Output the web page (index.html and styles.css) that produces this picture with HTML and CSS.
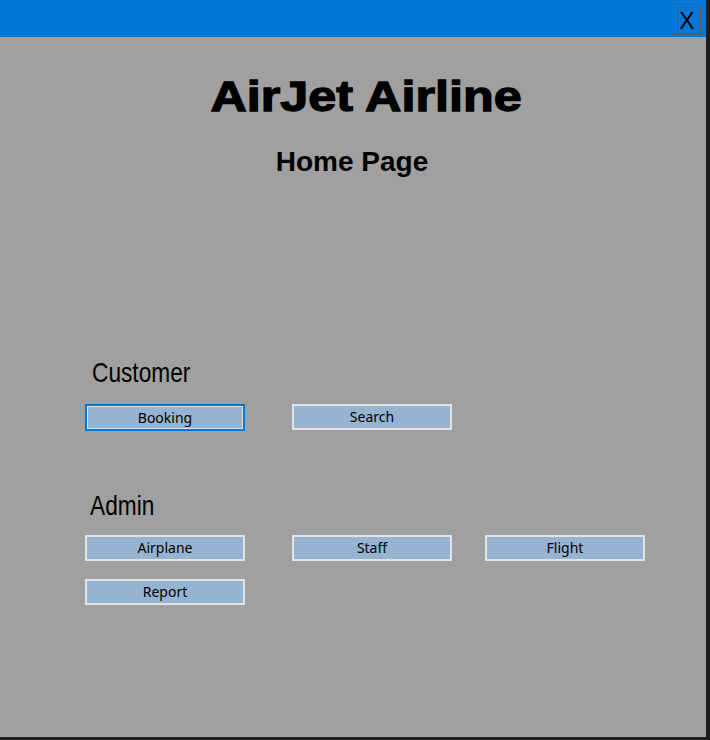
FILE: index.html
```html
<!DOCTYPE html>
<html>
<head>
<meta charset="utf-8">
<title>AirJet Airline</title>
<link rel="stylesheet" href="styles.css">
</head>
<body>
<div class="window">
  <div class="titlebar">
    <button class="close">X</button>
  </div>
  <div class="content">
    <h1 class="title"><span>AirJet Airline</span></h1>
    <h2 class="subtitle">Home Page</h2>
    <section class="group group-customer">
      <div class="label label-customer"><span>Customer</span></div>
      <div class="grid">
        <button class="btn btn-focus">Booking</button>
        <button class="btn">Search</button>
      </div>
    </section>
    <section class="group group-admin">
      <div class="label"><span>Admin</span></div>
      <div class="grid">
        <button class="btn">Airplane</button>
        <button class="btn">Staff</button>
        <button class="btn">Flight</button>
        <button class="btn">Report</button>
      </div>
    </section>
  </div>
</div>
</body>
</html>
```
FILE: styles.css
```css
html, body {
  margin: 0;
  padding: 0;
}
body {
  background: #1e1e1e;
  width: 710px;
  height: 740px;
  overflow: hidden;
}
.window {
  width: 706px;
  height: 737px;
  background: #a0a0a0;
  display: flex;
  flex-direction: column;
}
.titlebar {
  height: 37px;
  background: #0078d7;
  display: flex;
  justify-content: flex-end;
  align-items: flex-start;
  padding-top: 7px;
  padding-right: 5px;
  box-sizing: border-box;
}
.close {
  width: 28px;
  height: 28px;
  box-sizing: border-box;
  border: 1px solid #5c5a55;
  background: transparent;
  color: #000;
  font-family: "Liberation Sans", Arial, sans-serif;
  font-size: 23px;
  line-height: 26px;
  padding: 0;
  margin: 0;
  display: flex;
  align-items: center;
  justify-content: center;
}
.content {
  display: flex;
  flex-direction: column;
}
.title {
  margin: 38px 0 0 0;
  padding-left: 27px;
  text-align: center;
  font-family: "Liberation Sans", Arial, sans-serif;
  font-weight: bold;
  font-size: 43px;
  line-height: 43px;
  -webkit-text-stroke: 1.3px #000;
  color: #000;
}
.title span {
  display: inline-block;
  transform: scaleX(1.17);
  transform-origin: center center;
}
.subtitle {
  margin: 30px 0 0 0;
  padding-right: 2px;
  text-align: center;
  font-family: "Liberation Sans", Arial, sans-serif;
  font-weight: bold;
  font-size: 28px;
  line-height: 28px;
  color: #000;
}
.group {
  padding-left: 85px;
  display: flex;
  flex-direction: column;
  gap: 17px;
}
.group-customer {
  margin-top: 183px;
}
.group-admin {
  margin-top: 61px;
  gap: 15px;
}
.label {
  padding-left: 5px;
  height: 28px;
  font-family: "Liberation Sans", Arial, sans-serif;
  font-size: 28px;
  line-height: 28px;
  color: #000;
}
.label-customer {
  padding-left: 7px;
}
.label span {
  display: inline-block;
  transform: scaleX(0.81);
  transform-origin: left center;
}
.grid {
  display: grid;
  grid-template-columns: 207px 193px 160px;
  row-gap: 18px;
}
.btn {
  width: 160px;
  height: 26px;
  box-sizing: border-box;
  border: 2px solid #e3e3e3;
  background: #97b3d2;
  color: #000;
  font-family: "Noto Sans", "Open Sans", sans-serif;
  font-size: 14px;
  padding: 0 0 1px 0;
  margin: 0;
  display: flex;
  align-items: center;
  justify-content: center;
}
.btn-focus {
  border-color: #0078d7;
  box-shadow: inset 0 0 0 1px #e3e3e3;
  height: 27px;
}
```
